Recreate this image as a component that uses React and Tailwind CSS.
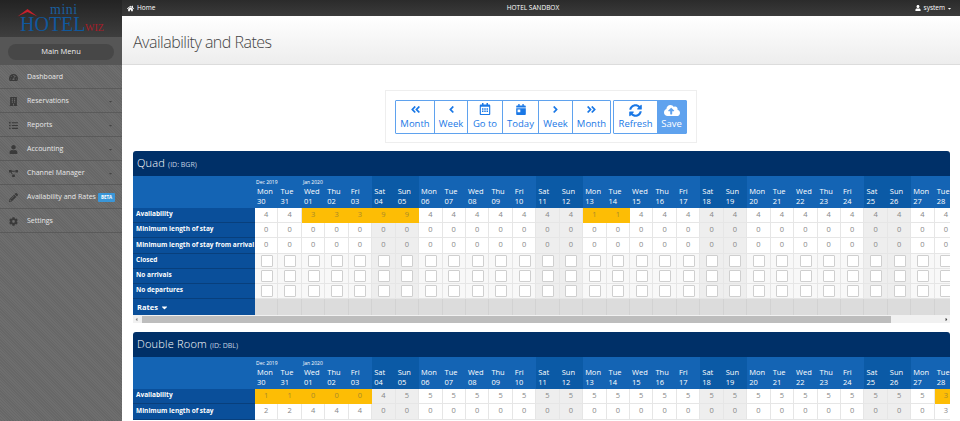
import React from 'react';
import {
  FaAngleDoubleLeft, FaAngleDoubleRight, FaAngleLeft, FaAngleRight, FaRegCalendarAlt, FaCalendarDay,
  FaSyncAlt, FaCloudUploadAlt, FaHome, FaUser, FaCaretDown, FaTachometerAlt, FaBuilding, FaListUl,
  FaProjectDiagram, FaPencilAlt, FaCog, FaCaretLeft, FaCaretRight,
} from 'react-icons/fa';

const names = ['Mon', 'Tue', 'Wed', 'Thu', 'Fri', 'Sat', 'Sun'];
const dates = ['30', '31', '01', '02', '03', '04', '05', '06', '07', '08', '09', '10', '11', '12', '13', '14', '15', '16', '17', '18', '19', '20', '21', '22', '23', '24', '25', '26', '27', '28'];
const days = dates.map((d, i) => ({ name: names[i % 7], date: d, weekend: i % 7 === 5 || i % 7 === 6 }));

const menu = [
  { label: 'Dashboard', icon: FaTachometerAlt },
  { label: 'Reservations', icon: FaBuilding, arrow: true },
  { label: 'Reports', icon: FaListUl, arrow: true },
  { label: 'Accounting', icon: FaUser, arrow: true },
  { label: 'Channel Manager', icon: FaProjectDiagram, arrow: true },
  { label: 'Availability and Rates', icon: FaPencilAlt, beta: true },
  { label: 'Settings', icon: FaCog },
];

const tools = [
  { label: 'Month', icon: FaAngleDoubleLeft, w: 'w-[38px]', size: 'w-[11px] h-[11px]' },
  { label: 'Week', icon: FaAngleLeft, w: 'w-[33px]', size: 'w-[11px] h-[11px]' },
  { label: 'Go to', icon: FaRegCalendarAlt, w: 'w-[35px]', size: 'w-[12px] h-[12px]' },
  { label: 'Today', icon: FaCalendarDay, w: 'w-[36px]', size: 'w-[10px] h-[11px]' },
  { label: 'Week', icon: FaAngleRight, w: 'w-[34px]', size: 'w-[11px] h-[11px]' },
  { label: 'Month', icon: FaAngleDoubleRight, w: 'w-[38px]', size: 'w-[11px] h-[11px]' },
];

const quadAvail = [4, 4, 3, 3, 3, 9, 9, 4, 4, 4, 4, 4, 4, 4, 1, 1, 4, 4, 4, 4, 4, 4, 4, 4, 4, 4, 4, 4, 4, 4];
const quadGold = [2, 3, 4, 5, 6, 14, 15];
const dblAvail = [1, 1, 0, 0, 0, 4, 5, 5, 5, 5, 5, 5, 5, 5, 5, 5, 5, 5, 5, 5, 5, 5, 5, 5, 5, 5, 5, 5, 5, 3];
const dblGold = [0, 1, 2, 3, 4, 29];
const zeros = days.map(() => 0);
const dblMin = [2, 2, 4, 4, 4, ...Array(24).fill(0), 3];

const Label = ({ children }) => (
  <div className="w-[122px] shrink-0 h-[15.2px] bg-[#0a4f9a] border-b border-[#083f7c] pl-[3px] pb-[2px] text-[6.5px] font-bold text-white flex items-center whitespace-nowrap">
    {children}
  </div>
);

const NumberRow = ({ label, values, gold = [] }) => (
  <div className="flex">
    <Label>{label}</Label>
    {days.map((d, i) => (
      <div
        key={i}
        className={`w-[23.45px] shrink-0 h-[15.2px] pb-[1px] flex items-center justify-center text-[7.5px] border-r border-b border-[#e6e6e6] ${
          gold.includes(i) ? 'bg-[#fdbd05] text-[#a88a2a] border-[#fdbd05]' : d.weekend ? 'bg-[#eeeeee] text-[#888]' : 'bg-white text-[#888]'
        }`}
      >
        {values[i]}
      </div>
    ))}
  </div>
);

const CheckRow = ({ label }) => (
  <div className="flex">
    <Label>{label}</Label>
    {days.map((d, i) => (
      <div
        key={i}
        className={`w-[23.45px] shrink-0 h-[15.2px] flex items-center justify-center border-r border-b border-[#e6e6e6] ${d.weekend ? 'bg-[#eeeeee]' : 'bg-[#f8f8f8]'}`}
      >
        <div className="w-[12px] h-[12px] ml-[1px] bg-white border border-[#cfcfcf] rounded-[1px]" />
      </div>
    ))}
  </div>
);

const DayHeader = () => (
  <div className="flex h-[32px]">
    <div className="w-[122px] shrink-0 bg-[#1464b4]" />
    {days.map((d, i) => (
      <div key={i} className={`w-[23.45px] shrink-0 pl-[2px] text-white relative ${d.weekend ? 'bg-[#0b5aa6]' : 'bg-[#1464b4]'}`}>
        {i === 0 && <span className="absolute left-[1px] top-[3px] text-[5px] whitespace-nowrap">Dec 2019</span>}
        {i === 2 && <span className="absolute left-[1px] top-[3px] text-[5px] whitespace-nowrap">Jan 2020</span>}
        <div className="pt-[10px] text-[7.5px] leading-[10px]">{d.name}</div>
        <div className="text-[7.5px] leading-[10px]">{d.date}</div>
      </div>
    ))}
  </div>
);

const Panel = ({ name, id, children }) => (
  <div className="w-[817px] rounded-t-[3px] overflow-hidden">
    <div className="h-[25px] bg-[#003068] text-white flex items-baseline pl-[4px] pt-[4px]">
      <span className="text-[11px] font-light tracking-[0.2px]">{name}</span>
      <span className="text-[7px] ml-[3px] text-[#c5d3e4]">(ID: {id})</span>
    </div>
    <DayHeader />
    {children}
  </div>
);

export default function App() {
  return (
    <div className="flex w-[960px] h-[421px] overflow-hidden bg-white text-[#333] font-['Open_Sans',sans-serif]">
      <aside className="w-[122px] shrink-0 bg-[repeating-linear-gradient(45deg,#6e6e6e_0_1px,#676767_1px_2px)] flex flex-col">
        <div className="h-[37px] bg-gradient-to-b from-[#232323] to-[#3e3e3e] relative overflow-hidden">
          <svg className="absolute left-[17px] top-[8px]" width="21" height="9" viewBox="0 0 21 9">
            <path d="M0.5 8.5 L10.5 1 L20.5 8.5 L10.5 4 Z" fill="#c8202c" />
          </svg>
          <span className="absolute left-[50px] top-[3px] text-[14px] leading-[13px] tracking-[0.5px] text-[#1a5e9c] font-['Liberation_Serif',serif]">mini</span>
          <span className="absolute left-[20px] top-[17px] text-[20px] leading-[15px] text-[#10589c] font-['Liberation_Serif',serif]">HOTEL</span>
          <span className="absolute left-[85px] top-[23px] text-[10px] leading-[9px] text-[#a81c28] font-['Liberation_Serif',serif]">WIZ</span>
        </div>
        <div className="h-[28px] bg-[#565656] flex items-center justify-center pt-[2px]">
          <div className="w-[106px] h-[16px] rounded-full bg-[#474747] text-[#eee] text-[7.5px] flex items-center justify-center">Main Menu</div>
        </div>
        {menu.map((m) => {
          const Icon = m.icon;
          return (
            <div key={m.label} className="h-[24px] shrink-0 pt-[2px] flex items-center border-b border-[#5a5a5a] text-[#e8e8e8] text-[7px] relative">
              <Icon className="w-[9px] h-[9px] ml-[9px] text-[#3a3a3a]" />
              <span className="ml-[9px] whitespace-nowrap">{m.label}</span>
              {m.beta && <span className="ml-[2px] bg-[#3a96d8] text-white text-[4.5px] font-bold px-[3px] py-[2px] rounded-[1px] leading-[5px]">BETA</span>}
              {m.arrow && <FaCaretDown className="absolute right-[9px] w-[5px] h-[5px] text-[#444]" />}
            </div>
          );
        })}
      </aside>

      <div className="flex-1 min-w-0 flex flex-col">
        <header className="h-[16px] shrink-0 bg-gradient-to-b from-[#2b2b2b] to-[#3b3b3b] text-white text-[6.5px] flex items-center justify-between pl-[5px] pr-[8px]">
          <div className="flex items-center gap-[3px]">
            <FaHome className="w-[7px] h-[7px]" />
            <span>Home</span>
          </div>
          <span className="mr-[4px]">HOTEL SANDBOX</span>
          <div className="flex items-center gap-[2px]">
            <FaUser className="w-[6px] h-[6px]" />
            <span className="ml-[1px]">system</span>
            <FaCaretDown className="w-[5px] h-[5px]" />
          </div>
        </header>

        <div className="h-[49px] shrink-0 bg-gradient-to-b from-white to-[#ededed] border-b border-[#dcdcdc] pl-[11px] pt-[3px] flex items-center">
          <h1 className="text-[16px] font-light tracking-[-0.5px] text-[#444]">Availability and Rates</h1>
        </div>

        <div className="flex justify-center pt-[25px]">
          <div className="w-[312px] h-[53px] border border-[#eeeeee] flex items-center pl-[9px] gap-[2px]">
            <div className="flex h-[34px] border border-[#5fa2ee] rounded-[1px]">
              {tools.map((t, i) => {
                const Icon = t.icon;
                return (
                  <div key={i} className={`${t.w} flex flex-col items-center justify-center text-[#1a78e6] text-[9.5px] leading-[13px] ${i > 0 ? 'border-l border-[#5fa2ee]' : ''}`}>
                    <Icon className={`${t.size} mb-[2px]`} />
                    {t.label}
                  </div>
                );
              })}
            </div>
            <div className="flex h-[34px] border border-[#5fa2ee] rounded-[1px]">
              <div className="w-[43px] flex flex-col items-center justify-center text-[#1a78e6] text-[9.5px] leading-[13px]">
                <FaSyncAlt className="w-[13px] h-[13px]" />
                Refresh
              </div>
              <div className="w-[29px] bg-[#5fa2ee] flex flex-col items-center justify-center text-white text-[9.5px] leading-[13px]">
                <FaCloudUploadAlt className="w-[16px] h-[13px]" />
                Save
              </div>
            </div>
          </div>
        </div>

        <div className="pl-[11px] pt-[8px] flex flex-col gap-[9px]">
          <Panel name="Quad" id="BGR">
            <NumberRow label="Availability" values={quadAvail} gold={quadGold} />
            <NumberRow label="Minimum length of stay" values={zeros} />
            <NumberRow label="Minimum length of stay from arrival" values={zeros} />
            <CheckRow label="Closed" />
            <CheckRow label="No arrivals" />
            <CheckRow label="No departures" />
            <div className="flex h-[16px]">
              <div className="w-[122px] shrink-0 bg-[#0a4f9a] text-white text-[7.5px] font-bold flex items-center pl-[4px] gap-[2px]">
                Rates <FaCaretDown className="w-[9px] h-[9px]" />
              </div>
              {days.map((d, i) => (
                <div key={i} className="w-[23.45px] shrink-0 bg-[#dcdcdc] border-r border-[#d2d2d2]" />
              ))}
            </div>
            <div className="h-[8px] bg-[#f1f1f1] flex items-center">
              <FaCaretLeft className="w-[5px] h-[5px] ml-[1px] text-[#888]" />
              <div className="ml-[3px] w-[749px] h-[7px] bg-[#bdbdbd]" />
              <FaCaretRight className="w-[5px] h-[5px] ml-auto mr-[1px] text-[#444]" />
            </div>
          </Panel>
          <Panel name="Double Room" id="DBL">
            <NumberRow label="Availability" values={dblAvail} gold={dblGold} />
            <NumberRow label="Minimum length of stay" values={dblMin} />
          </Panel>
        </div>
      </div>
    </div>
  );
}
